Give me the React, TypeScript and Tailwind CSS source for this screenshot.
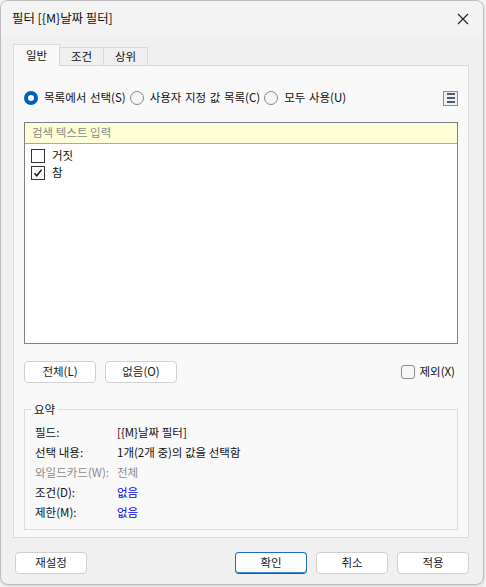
import React from "react";

const font = { fontFamily: '"Noto Sans CJK KR", "Noto Sans", sans-serif' };

function Btn({ children, primary }: { children: React.ReactNode; primary?: boolean }) {
  return (
    <div
      className={`w-[72px] h-[22px] rounded-[4px] bg-white flex items-center justify-center text-[11.5px] text-[#1a1a1a] ${
        primary ? "border border-[#1a6fc4] border-b-[#0a5db0] shadow-[inset_0_-1px_0_#3d86d1]" : "border border-[#d0d0d0]"
      }`}
    >
      {children}
    </div>
  );
}

function Radio({ checked }: { checked?: boolean }) {
  return checked ? (
    <div className="w-[14px] h-[14px] rounded-full bg-[#005fb8] flex items-center justify-center shrink-0">
      <div className="w-[6px] h-[6px] rounded-full bg-white" />
    </div>
  ) : (
    <div className="w-[14px] h-[14px] rounded-full border border-[#8a8a8a] bg-[#f5f5f5] shrink-0" />
  );
}

function Check({ checked }: { checked?: boolean }) {
  return (
    <div className="w-[14px] h-[14px] border border-[#333] bg-white flex items-center justify-center">
      {checked && (
        <svg width="10" height="10" viewBox="0 0 10 10">
          <path d="M1.5 5.2 L3.8 7.8 L8.6 1.6" fill="none" stroke="#111" strokeWidth="1.4" />
        </svg>
      )}
    </div>
  );
}

export default function App() {
  return (
    <div className="w-[486px] h-[587px] bg-[#f3f3f3]" style={font}>
      <div className="w-[484px] h-[585px] rounded-[8px] border border-[#bcbcbc] bg-[#f0f0f0] overflow-hidden flex flex-col shadow-[0_1px_3px_rgba(0,0,0,0.15)]">
        {/* title bar */}
        <div className="h-[35px] bg-[#f3f3f3] flex items-center justify-between pl-[11px] pr-[14px] shrink-0">
          <span className="text-[12.4px] text-[#111]">필터 [{"{M}"}날짜 필터]</span>
          <svg width="12" height="12" viewBox="0 0 12 12">
            <path d="M1 1 L11 11 M11 1 L1 11" stroke="#222" strokeWidth="1.1" />
          </svg>
        </div>
        {/* body */}
        <div className="pl-[12px] pt-[8px] flex flex-col">
          {/* tabs */}
          <div className="flex items-end h-[22px] relative z-10 -mb-px text-[11.5px] text-[#111]">
            <div className="w-[47px] h-[22px] bg-[#f9f9f9] border border-[#d9d9d9] border-b-0 flex items-center justify-center">
              일반
            </div>
            <div className="w-[44px] h-[19px] bg-[#f0f0f0] border border-[#d9d9d9] border-l-0 flex items-center justify-center">
              조건
            </div>
            <div className="w-[44px] h-[19px] bg-[#f0f0f0] border border-[#d9d9d9] border-l-0 flex items-center justify-center">
              상위
            </div>
          </div>
          {/* panel */}
          <div className="w-[456px] h-[473px] bg-[#f9f9f9] border border-[#d9d9d9] pl-[10px] pr-[10px] pt-[24px] flex flex-col text-[11.5px] text-[#111]">
            {/* radio row */}
            <div className="h-[16px] flex items-center whitespace-nowrap [word-spacing:1px]">
              <Radio checked />
              <span className="ml-[6px]">목록에서 선택(S)</span>
              <div className="ml-[4px]"><Radio /></div>
              <span className="ml-[6px]">사용자 지정 값 목록(C)</span>
              <div className="ml-[4px]"><Radio /></div>
              <span className="ml-[6px]">모두 사용(U)</span>
              <div className="ml-auto w-[15px] h-[15px] border border-[#8c8c8c] bg-[#f0f0f0] flex flex-col items-center justify-center gap-[2px]">
                <div className="w-[8px] h-[2px] bg-[#4d5b70]" />
                <div className="w-[8px] h-[2px] bg-[#4d5b70]" />
                <div className="w-[8px] h-[2px] bg-[#4d5b70]" />
              </div>
            </div>
            {/* list */}
            <div className="mt-[16px] w-[434px] h-[222px] border border-[#7f7f87] bg-white flex flex-col">
              <div className="h-[21px] bg-[#ffffd7] border-b border-[#a8a8a8] flex items-center pl-[7px] text-[#8a8a8a]">
                검색 텍스트 입력
              </div>
              <div className="pl-[6px] pt-[3px] flex flex-col">
                <div className="h-[17px] flex items-center">
                  <Check />
                  <span className="ml-[7px]">거짓</span>
                </div>
                <div className="h-[17px] flex items-center">
                  <Check checked />
                  <span className="ml-[7px]">참</span>
                </div>
              </div>
            </div>
            {/* buttons row */}
            <div className="mt-[17px] h-[22px] flex items-center">
              <Btn>전체(L)</Btn>
              <div className="ml-[9px]"><Btn>없음(O)</Btn></div>
              <div className="ml-auto flex items-center pr-[3px]">
                <div className="w-[14px] h-[14px] rounded-[3px] border border-[#8a8a8a] bg-[#f7f7f7]" />
                <span className="ml-[4px]">제외(X)</span>
              </div>
            </div>
            {/* summary */}
            <div className="mt-[26px] w-[434px] h-[121px] border border-[#dcdcdc] relative pl-[10px] pt-[13px] flex flex-col">
              <span className="absolute left-[6px] top-[-9px] px-[3px] bg-[#f9f9f9] leading-[16px]">요약</span>
              <div className="h-[20px] flex items-center">
                <span className="w-[82px]">필드:</span>
                <span>[{"{M}"}날짜 필터]</span>
              </div>
              <div className="h-[20px] flex items-center">
                <span className="w-[82px]">선택 내용:</span>
                <span>1개(2개 중)의 값을 선택함</span>
              </div>
              <div className="h-[20px] flex items-center text-[#8c8c8c]">
                <span className="w-[82px] whitespace-nowrap">와일드카드(W):</span>
                <span>전체</span>
              </div>
              <div className="h-[20px] flex items-center">
                <span className="w-[82px]">조건(D):</span>
                <span className="text-[#0000f0]">없음</span>
              </div>
              <div className="h-[20px] flex items-center">
                <span className="w-[82px]">제한(M):</span>
                <span className="text-[#0000f0]">없음</span>
              </div>
            </div>
          </div>
        </div>
        {/* bottom buttons */}
        <div className="mt-[14px] pl-[14px] pr-[14px] flex items-center">
          <Btn>재설정</Btn>
          <div className="ml-auto flex gap-[9px]">
            <Btn primary>확인</Btn>
            <Btn>취소</Btn>
            <Btn>적용</Btn>
          </div>
        </div>
      </div>
    </div>
  );
}
